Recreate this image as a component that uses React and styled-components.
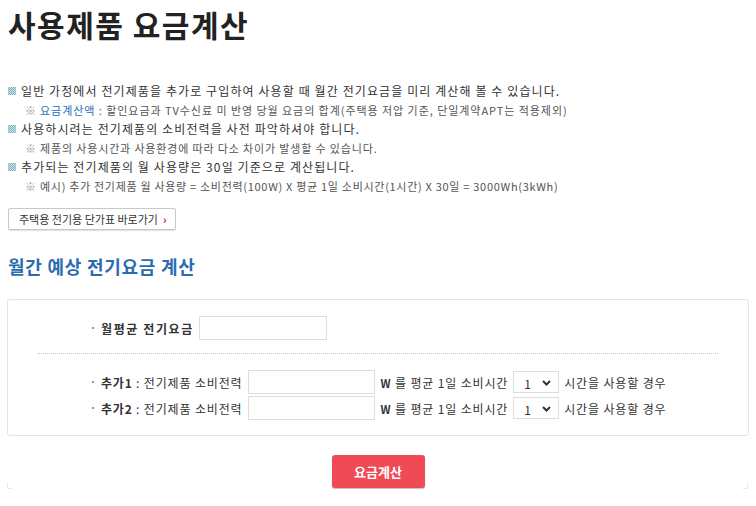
import React from "react";
import styled, { createGlobalStyle } from "styled-components";

const Global = createGlobalStyle`
  html, body { margin: 0; padding: 0; background: #fff; }
  body { font-family: "Noto Sans CJK KR", "Noto Sans", sans-serif; color: #333; }
  * { box-sizing: border-box; }
`;

const Page = styled.div`
  width: 756px;
  height: 506px;
  padding: 0 8px 0 7px;
  display: flex;
  flex-direction: column;
  overflow: hidden;
`;

const Title = styled.h1`
  margin: 7px 0 0 1px;
  font-size: 30px;
  line-height: 34px;
  font-weight: 700;
  color: #222;
  letter-spacing: 1.5px;
`;

const InfoList = styled.ul`
  list-style: none;
  margin: 40px 0 0 1px;
  padding: 0;
  display: flex;
  flex-direction: column;
`;

const InfoItem = styled.li`
  display: flex;
  align-items: center;
  gap: 5px;
  height: 19px;
  white-space: nowrap;
  color: ${(p) => (p.$sub ? "#555" : "#333")};
  padding-left: ${(p) => (p.$sub ? "17px" : "0")};
  font-size: ${(p) => (p.$sub ? "11px" : "12px")};
  letter-spacing: ${(p) => p.$ls || (p.$sub ? "0.95px" : "1.1px")};
`;

const Note = styled.span`
  color: #999;
  margin-right: -1px;
  letter-spacing: 0;
`;

const Blue = styled.span`
  color: #2a6ebb;
`;

const LinkButton = styled.button`
  align-self: flex-start;
  margin: 13px 0 0 1px;
  height: 22px;
  padding: 0 8px 0 10px;
  display: flex;
  align-items: center;
  gap: 5px;
  border: 1px solid #c8c8c8;
  border-radius: 2px;
  background: #fff;
  box-shadow: 0 1px 1px rgba(0, 0, 0, 0.12);
  font-family: inherit;
  font-size: 11px;
  letter-spacing: 0;
  color: #333;
  cursor: pointer;
`;

const Arrow = styled.span`
  color: #c0282d;
  font-weight: 700;
  font-size: 11px;
`;

const SubTitle = styled.h2`
  margin: 24px 0 0 1px;
  font-size: 18px;
  line-height: 24px;
  font-weight: 700;
  color: #2b6cb0;
  letter-spacing: 0.75px;
`;

const CalcBox = styled.div`
  margin-top: 21px;
  width: 742px;
  height: 137px;
  border: 1px solid #e3e3e3;
  border-radius: 3px;
  padding: 15px 0 0 0;
  display: flex;
  flex-direction: column;
`;

const Row = styled.div`
  display: flex;
  align-items: center;
  gap: 5px;
  padding-left: 84px;
  height: 26px;
  font-size: 12px;
  letter-spacing: 0.85px;
  white-space: nowrap;
  color: #333;
`;

const Dot = styled.span`
  width: 2px;
  height: 2px;
  background: #999;
  margin-right: 2px;
`;

const Label = styled.b`
  font-weight: 700;
  color: #333;
  letter-spacing: ${(p) => p.$ls || "0.8px"};
`;

const TextInput = styled.input`
  width: ${(p) => p.$w || 128}px;
  height: 24px;
  border: 1px solid #ddd;
  padding: 0 4px;
  font-family: inherit;
  font-size: 12px;
  outline: none;
  margin-right: 1px;
`;

const Divider = styled.div`
  margin: 12px 0 15px 30px;
  width: 680px;
  border-top: 1px dotted #c8c8c8;
`;

const SelectWrap = styled.span`
  position: relative;
  display: inline-flex;
`;

const Select = styled.select`
  appearance: none;
  width: 46px;
  height: 22px;
  border: 1px solid #ddd;
  background: #fff;
  padding: 3px 0 0 10px;
  font-family: inherit;
  font-size: 12px;
  color: #333;
  outline: none;
`;

const Chevron = styled.svg`
  position: absolute;
  right: 8px;
  top: 9px;
  pointer-events: none;
`;

const Unit = styled.b`
  font-weight: 700;
  font-size: 11px;
  color: #333;
`;

const Actions = styled.div`
  position: relative;
  display: flex;
  justify-content: center;
  margin-top: 19px;
  padding: 0 0 0 1px;
  height: 34px;

  &::before,
  &::after {
    content: "";
    position: absolute;
    bottom: 0;
    width: 4px;
    height: 5px;
    border-bottom: 1px solid #e6e6e6;
  }
  &::before {
    left: 0;
    border-left: 1px solid #e6e6e6;
    border-bottom-left-radius: 2px;
  }
  &::after {
    right: 0;
    border-right: 1px solid #e6e6e6;
    border-bottom-right-radius: 2px;
  }
`;

const RedButton = styled.button`
  width: 93px;
  height: 33px;
  border: none;
  border-radius: 3px;
  background: #ef4a55;
  box-shadow: 0 1px 1px rgba(0, 0, 0, 0.25);
  color: #fff;
  font-family: inherit;
  font-size: 13px;
  font-weight: 700;
  cursor: pointer;
`;

const Bullet = () => (
  <svg width="8" height="8" viewBox="0 0 8 8">
    <rect width="8" height="8" fill="#7fb2ba" />
    {[0, 1, 2, 3, 4, 5, 6, 7].map((y) =>
      [0, 1, 2, 3, 4, 5, 6, 7]
        .filter((x) => (x + y) % 2 === 0)
        .map((x) => <rect key={x + "-" + y} x={x} y={y} width="1" height="1" fill="#c8e2e5" />)
    )}
  </svg>
);

const HourSelect = () => (
  <SelectWrap>
    <Select defaultValue="1">
      {Array.from({ length: 24 }, (_, i) => (
        <option key={i} value={i + 1}>
          {i + 1}
        </option>
      ))}
    </Select>
    <Chevron width="9" height="6" viewBox="0 0 9 6">
      <path d="M1 1 L4.5 4.5 L8 1" fill="none" stroke="#333" strokeWidth="2" />
    </Chevron>
  </SelectWrap>
);

const AddRow = ({ n }) => (
  <Row>
    <Dot />
    <span>
      <Label>추가{n}</Label> : 전기제품 소비전력
    </span>
    <TextInput $w={127} />
    <span>
      <Unit>W</Unit> 를 평균 1일 소비시간
    </span>
    <HourSelect />
    <span>시간을 사용할 경우</span>
  </Row>
);

export default function App() {
  return (
    <Page>
      <Global />
      <Title>사용제품 요금계산</Title>
      <InfoList>
        <InfoItem>
          <Bullet />
          일반 가정에서 전기제품을 추가로 구입하여 사용할 때 월간 전기요금을 미리 계산해 볼 수 있습니다.
        </InfoItem>
        <InfoItem $sub>
          <Note>※</Note>
          <span>
            <Blue>요금계산액</Blue> : 할인요금과 TV수신료 미 반영 당월 요금의 합계(주택용 저압 기준, 단일계약APT는 적용제외)
          </span>
        </InfoItem>
        <InfoItem>
          <Bullet />
          사용하시려는 전기제품의 소비전력을 사전 파악하셔야 합니다.
        </InfoItem>
        <InfoItem $sub $ls="0.85px">
          <Note>※</Note>
          제품의 사용시간과 사용환경에 따라 다소 차이가 발생할 수 있습니다.
        </InfoItem>
        <InfoItem>
          <Bullet />
          추가되는 전기제품의 월 사용량은 30일 기준으로 계산됩니다.
        </InfoItem>
        <InfoItem $sub $ls="0.7px">
          <Note>※</Note>
          예시) 추가 전기제품 월 사용량 = 소비전력(100W) X 평균 1일 소비시간(1시간) X 30일 = 3000Wh(3kWh)
        </InfoItem>
      </InfoList>
      <LinkButton>
        주택용 전기용 단가표 바로가기 <Arrow>›</Arrow>
      </LinkButton>
      <SubTitle>월간 예상 전기요금 계산</SubTitle>
      <CalcBox>
        <Row>
          <Dot />
          <Label $ls="1.6px">월평균 전기요금</Label>
          <TextInput $w={128} />
        </Row>
        <Divider />
        <AddRow n={1} />
        <AddRow n={2} />
      </CalcBox>
      <Actions>
        <RedButton>요금계산</RedButton>
      </Actions>
    </Page>
  );
}
